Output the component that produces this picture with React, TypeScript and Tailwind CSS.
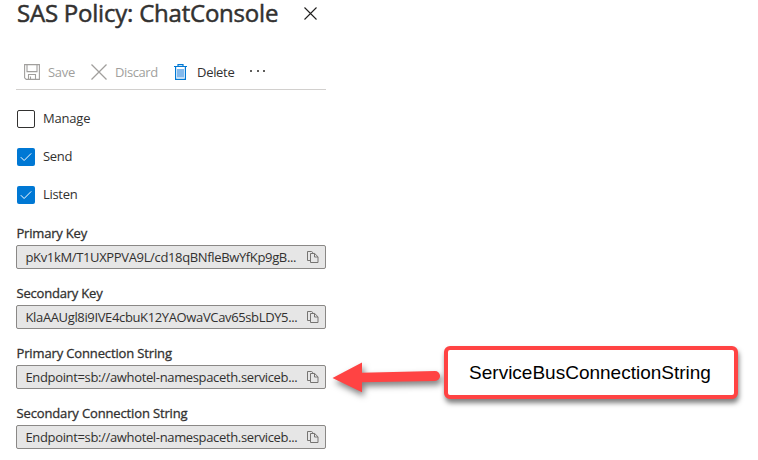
import type { ReactNode } from "react";

function Check({ label, checked, tracking }: { label: string; checked?: boolean; tracking: string }) {
  return (
    <label className="flex h-[18px] items-center gap-2 pl-px">
      <span
        className={`flex size-[18px] shrink-0 items-center justify-center rounded-[2px] ${
          checked ? "bg-[#0078d4]" : "border border-[#323130] bg-white"
        }`}
      >
        {checked && (
          <svg width="12" height="10" viewBox="0 0 12 10" fill="none" stroke="#fff" strokeWidth="1">
            <path d="M.8 5.2 4.1 8.5 11.2 1.4" />
          </svg>
        )}
      </span>
      <span className={tracking}>{label}</span>
    </label>
  );
}

function CopyIcon() {
  return (
    <svg className="shrink-0" width="12" height="12" viewBox="0 0 12 12" fill="none" stroke="#767472" strokeWidth="1">
      <path d="M3.5 9.5h-3v-9h4.2l1.8 1.8" />
      <path d="M3.5 2.5h4.2l3.3 3.3v5.7H3.5zM7.5 2.5v3.5H11" />
    </svg>
  );
}

function Field({ label, value, labelTracking, tracking }: { label: string; value: string; labelTracking: string; tracking: string }) {
  return (
    <div className="h-[60px]">
      <div className={`h-5 pl-[0.5px] leading-[17px] [-webkit-text-stroke:0.3px_#323130] ${labelTracking}`}>{label}</div>
      <div className="flex h-6 items-center justify-between rounded-[2px] border border-[#8a8886] bg-[#e6e6e6] pr-[6px] pl-[8.5px]">
        <span className={`leading-5 whitespace-nowrap ${tracking}`}>{value}</span>
        <CopyIcon />
      </div>
    </div>
  );
}

function Command({ icon, children }: { icon: ReactNode; children: ReactNode }) {
  return (
    <div className="flex h-5 items-center">
      {icon}
      {children}
    </div>
  );
}

export default function App() {
  return (
    <div className="relative h-[460px] w-[758px] overflow-hidden bg-white font-['Open_Sans',sans-serif] text-[13px] text-[#323130]">
      <main className="ml-4 w-[310px]">
        <header className="flex h-[27px] items-center">
          <h1 className="mb-[2px] w-[287.5px] shrink-0 pl-px text-[24px] leading-[25px] tracking-[-0.22px] whitespace-nowrap [-webkit-text-stroke:0.5px_#323130]">SAS Policy: ChatConsole</h1>
          <svg className="shrink-0" width="13" height="13" viewBox="0 0 13 13" stroke="#201f1e" strokeWidth="1.1">
            <path d="M.5.5 12.5 12.5M12.5.5.5 12.5" />
          </svg>
        </header>
        <nav className="mt-[35px] flex h-7 border-b border-[#d2d0ce] pl-2">
          <div className="w-[67px] text-[#a19f9d]">
            <Command
              icon={
                <svg className="mr-2 mb-px shrink-0" width="16" height="16" viewBox="0 0 16 16" fill="none" stroke="#a19f9d" strokeWidth="1.1">
                  <path d="M.6.6h14.8v14.8H2.2L.6 13.8zM3 .6v7h10v-7M4.5 15.2v-4.7h7v4.7M6.5 12.5v3" />
                </svg>
              }
            >
              <span className="pt-[2px] tracking-[-0.3px]">Save</span>
            </Command>
          </div>
          <div className="w-[83px] text-[#a19f9d]">
            <Command
              icon={
                <svg className="mr-2 mb-px shrink-0" width="16" height="16" viewBox="0 0 16 16" stroke="#a19f9d" strokeWidth="1.3">
                  <path d="m.5.5 15 15M15.5.5l-15 15" />
                </svg>
              }
            >
              <span className="pt-[2px] tracking-[-0.4px]">Discard</span>
            </Command>
          </div>
          <div className="w-[76px]">
            <Command
              icon={
                <svg className="mr-[10px] mb-px shrink-0" width="13" height="16" viewBox="0 0 13 16" fill="none" stroke="#0078d4" strokeWidth="1.2">
                  <path d="M3 5h7v8.5H3z" fill="#83b9ec" stroke="none" />
                  <path d="M0 2.5h13M4 2.3V.7h5v1.6M1.6 2.8v12.5h9.8V2.8" />
                </svg>
              }
            >
              <span className="pt-[2px] tracking-[-0.3px]">Delete</span>
            </Command>
          </div>
          <div className="flex h-[18px] items-center gap-[4.5px]">
            <i className="size-[2px] bg-[#605e5c]" />
            <i className="size-[2px] bg-[#605e5c]" />
            <i className="size-[2px] bg-[#605e5c]" />
          </div>
        </nav>
        <section className="mt-5 flex flex-col gap-5">
          <Check label="Manage" tracking="tracking-[-0.2px]" />
          <Check label="Send" checked tracking="tracking-[-0.3px]" />
          <Check label="Listen" checked tracking="tracking-[-0.3px]" />
        </section>
        <section className="mt-[21px]">
          <Field label="Primary Key" value="pKv1kM/T1UXPPVA9L/cd18qBNfleBwYfKp9gB..." labelTracking="tracking-[-0.2px]" tracking="tracking-[-0.35px]" />
          <Field label="Secondary Key" value="KlaAAUgl8i9IVE4cbuK12YAOwaVCav65sbLDY5..." labelTracking="tracking-[-0.2px]" tracking="tracking-[-0.36px]" />
          <Field label="Primary Connection String" value="Endpoint=sb://awhotel-namespaceth.serviceb..." labelTracking="tracking-[-0.14px]" tracking="tracking-[-0.35px]" />
          <Field label="Secondary Connection String" value="Endpoint=sb://awhotel-namespaceth.serviceb..." labelTracking="tracking-[-0.14px]" tracking="tracking-[-0.35px]" />
        </section>
      </main>

      <svg className="absolute top-[350px] left-[326px] drop-shadow-[2px_4px_3px_rgba(0,0,0,0.5)]" width="120" height="56" viewBox="0 0 120 56">
        <path d="M6.5 28 36 12.5v10.2L109 21a5 5 0 0 1 0 10.1L36 32.3v10z" fill="#ff4343" />
      </svg>
      <aside className="absolute top-[346px] left-[444px] flex h-[53px] w-[294px] items-center justify-center rounded-[6px] border-4 border-[#ff4343] bg-white pt-[2px] pr-[2px] font-['Liberation_Sans',sans-serif] text-[19px] text-black shadow-[1px_4px_5px_rgba(0,0,0,0.5)]">
        <span>ServiceBusConnectionString</span>
      </aside>
    </div>
  );
}
